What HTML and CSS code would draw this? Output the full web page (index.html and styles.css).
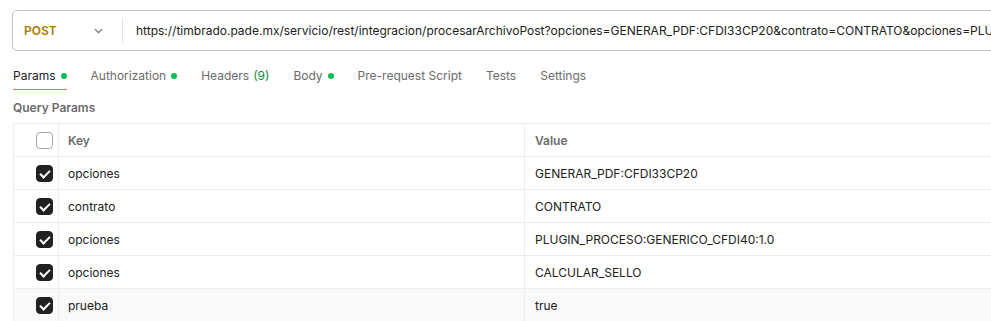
FILE: index.html
```html
<!DOCTYPE html>
<html lang="es">
<head>
    <meta charset="UTF-8">
    <title>Postman - procesarArchivoPost</title>
    <link rel="stylesheet" href="styles.css">
</head>
<body>
    <div class="request-bar">
        <div class="method">
            <span class="method-name">POST</span>
            <svg class="chevron" width="9" height="6" viewBox="0 0 9 6"><path d="M1 1.2l3.5 3.5 3.5-3.5" fill="none" stroke="#6b6b6b" stroke-width="1.1"/></svg>
        </div>
        <div class="url">https://timbrado.pade.mx/servicio/rest/integracion/procesarArchivoPost?opciones=GENERAR_PDF:CFDI33CP20&amp;contrato=CONTRATO&amp;opciones=PLU</div>
    </div>

    <ul class="tabs">
        <li class="active">Params<span class="dot"></span></li>
        <li>Authorization<span class="dot"></span></li>
        <li>Headers <span class="count">(9)</span></li>
        <li>Body<span class="dot"></span></li>
        <li>Pre-request Script</li>
        <li>Tests</li>
        <li>Settings</li>
    </ul>

    <div class="section-title">Query Params</div>

    <table class="params">
        <thead>
            <tr>
                <th class="check"><span class="box"></span></th>
                <th class="key">Key</th>
                <th>Value</th>
            </tr>
        </thead>
        <tbody>
            <tr>
                <td class="check"><span class="box on"></span></td>
                <td class="key">opciones</td>
                <td>GENERAR_PDF:CFDI33CP20</td>
            </tr>
            <tr>
                <td class="check"><span class="box on"></span></td>
                <td class="key">contrato</td>
                <td>CONTRATO</td>
            </tr>
            <tr>
                <td class="check"><span class="box on"></span></td>
                <td class="key">opciones</td>
                <td>PLUGIN_PROCESO:GENERICO_CFDI40:1.0</td>
            </tr>
            <tr>
                <td class="check"><span class="box on"></span></td>
                <td class="key">opciones</td>
                <td>CALCULAR_SELLO</td>
            </tr>
            <tr class="hover">
                <td class="check"><span class="box on"></span></td>
                <td class="key">prueba</td>
                <td>true</td>
            </tr>
        </tbody>
    </table>
</body>
</html>
```

FILE: styles.css
```css
* {
    margin: 0;
    padding: 0;
    box-sizing: border-box;
}

body {
    font-family: Inter, "Open Sans", sans-serif;
    font-size: 12px;
    color: #212121;
    background: #fff;
    padding: 10px 0 0 12px;
    overflow: hidden;
    width: 991px;
    height: 321px;
}

.request-bar {
    display: flex;
    align-items: center;
    height: 41px;
    width: 1100px;
    border: 1px solid #c2c2c2;
    border-radius: 5px;
}

.method {
    flex-shrink: 0;
    display: flex;
    align-items: center;
    justify-content: space-between;
    width: 110px;
    height: 25px;
    padding: 0 19px 0 11px;
    border-right: 1px solid #e6e6e6;
}

.method-name {
    font-weight: 600;
    color: #ad7a03;
    font-size: 12px;
}

.url {
    padding-left: 13px;
    white-space: nowrap;
    font-size: 12px;
    color: #212121;
}

.tabs {
    list-style: none;
    display: flex;
    gap: 24px;
    margin-top: 11px;
    padding-left: 1px;
}

.tabs li {
    display: flex;
    align-items: center;
    height: 28px;
    color: #6b6b6b;
    font-size: 12px;
    border-bottom: 1px solid transparent;
}

.tabs li.active {
    color: #212121;
    border-bottom-color: #ff6c37;
}

.dot {
    width: 6px;
    height: 6px;
    border-radius: 50%;
    background: #0cbb52;
    margin-left: 5px;
}

.count {
    color: #0b8a3f;
    margin-left: 4px;
}

.section-title {
    margin-top: 10px;
    padding-left: 1px;
    font-size: 12px;
    font-weight: 600;
    color: #6b6b6b;
}

.params {
    margin-top: 8px;
    margin-left: 1px;
    border-collapse: collapse;
    width: 1000px;
    table-layout: fixed;
}

.params th,
.params td {
    height: 33px;
    border: 1px solid #ededed;
    text-align: left;
    padding: 0 10px;
    font-size: 12px;
    font-weight: normal;
    white-space: nowrap;
}

.params th {
    font-weight: 600;
    color: #6b6b6b;
}

.params .check {
    width: 45px;
    padding: 0 5px 0 0;
    text-align: right;
}

.params .key {
    width: 466px;
    padding-left: 9px;
}

.params tr.hover td {
    background: #f9f9f9;
}

.box {
    display: inline-block;
    width: 17px;
    height: 17px;
    border: 1px solid #a6a6a6;
    border-radius: 4px;
    vertical-align: middle;
    position: relative;
}

.box.on {
    background: #212121;
    border-color: #212121;
}

.box.on::after {
    content: '';
    position: absolute;
    left: 5px;
    top: 2px;
    width: 4px;
    height: 8px;
    border: solid #fff;
    border-width: 0 2px 2px 0;
    transform: rotate(45deg);
}
```
